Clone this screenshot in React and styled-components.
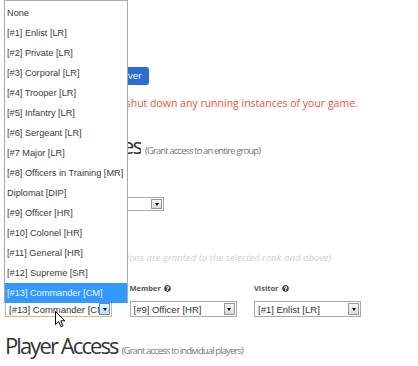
import React from 'react';
import styled, { createGlobalStyle } from 'styled-components';
import { FaQuestionCircle } from 'react-icons/fa';

const GlobalStyle = createGlobalStyle`
  html, body {
    margin: 0;
    padding: 0;
    background: #fff;
  }
`;

const ranks = [
  'None',
  '[#1] Enlist [LR]',
  '[#2] Private [LR]',
  '[#3] Corporal [LR]',
  '[#4] Trooper [LR]',
  '[#5] Infantry [LR]',
  '[#6] Sergeant [LR]',
  '[#7 Major [LR]',
  '[#8] Officers in Training [MR]',
  'Diplomat [DIP]',
  '[#9] Officer [HR]',
  '[#10] Colonel [HR]',
  '[#11] General [HR]',
  '[#12] Supreme [SR]',
  '[#13] Commander [CM]',
];

const Page = styled.div`
  position: relative;
  width: 418px;
  height: 366px;
  overflow: hidden;
  box-sizing: border-box;
  padding: 67px 0 0 5px;
  background: #fff;
  font-family: "Open Sans", sans-serif;
  color: #333;
`;

const ButtonRow = styled.div`
  display: flex;
  justify-content: flex-end;
  width: 144px;
`;

const Button = styled.button`
  height: 18px;
  padding: 0 7px;
  border: none;
  border-radius: 3px;
  background: #2d6cd3;
  color: #fff;
  font-family: "Open Sans", sans-serif;
  font-size: 9.5px;
  line-height: 18px;
`;

const Warning = styled.p`
  margin: 11px 0 0;
  font-size: 10.5px;
  line-height: 14px;
  color: #e8503a;
  white-space: nowrap;
`;

const Lead = styled.span`
  display: inline-block;
  width: ${p => p.$width}px;
  text-align: right;
  white-space: nowrap;
  overflow: hidden;
  vertical-align: top;
`;

const Heading = styled.h2`
  margin: ${p => p.$top}px 0 0;
  font-size: 22px;
  font-weight: 400;
  line-height: 26px;
  letter-spacing: -1.9px;
  color: #333;
  white-space: nowrap;
`;

const HeadingSub = styled.small`
  margin-left: 4px;
  font-size: 9.5px;
  letter-spacing: -0.9px;
  color: #777;
`;

const FieldLabel = styled.div`
  margin-top: 18px;
  height: 12px;
  font-size: 7.5px;
  font-weight: 700;
  line-height: 12px;
  color: #555;
`;

const SelectBox = styled.div`
  display: flex;
  align-items: center;
  box-sizing: border-box;
  width: ${p => p.$width}px;
  height: ${p => p.$height || 16}px;
  margin-top: ${p => p.$top || 0}px;
  padding: 0 1px 0 3px;
  border: 1px solid ${p => (p.$focused ? '#e2b467' : '#a9a9a9')};
  background: #fff;
  font-family: "Liberation Sans", Arial, sans-serif;
  font-size: 9.5px;
  color: #333;
`;

const SelectText = styled.span`
  flex: 1;
  overflow: hidden;
  white-space: nowrap;
`;

const Arrow = styled.span`
  display: flex;
  align-items: center;
  justify-content: center;
  box-sizing: border-box;
  width: 11px;
  height: ${p => p.$height || 12}px;
  border: 1px solid ${p => (p.$hover ? '#5a8fc0' : '#999')};
  background: ${p =>
    p.$hover
      ? 'linear-gradient(#e3f1fb, #bcdcf4)'
      : 'linear-gradient(#f6f6f6, #d9d9d9)'};

  &::after {
    content: '';
    border-left: 2.5px solid transparent;
    border-right: 2.5px solid transparent;
    border-top: 3px solid #111;
  }
`;

const Note = styled.p`
  margin: 40px 0 0;
  font-size: 9.6px;
  font-style: italic;
  line-height: 14px;
  color: #cfcfcf;
  white-space: nowrap;
`;

const RoleGrid = styled.div`
  display: grid;
  grid-template-columns: repeat(3, 124.5px);
  margin-top: 17px;
`;

const RoleLabel = styled.div`
  display: flex;
  align-items: center;
  gap: 3px;
  height: 12px;
  margin-bottom: 7px;
  font-size: 7.5px;
  font-weight: 700;
  color: #555;

  svg {
    width: 7px;
    height: 7px;
    color: #4a4a4a;
  }
`;

const DropList = styled.ul`
  position: absolute;
  left: 4px;
  top: 0;
  box-sizing: border-box;
  width: 124px;
  height: 303px;
  margin: 0;
  padding: 2px 0 0;
  list-style: none;
  border: 1px solid #a9a9a9;
  border-bottom: none;
  background: #fff;
  font-family: "Liberation Sans", Arial, sans-serif;
  font-size: 9.2px;
`;

const DropItem = styled.li`
  height: 20px;
  padding-left: 2px;
  line-height: 20px;
  white-space: nowrap;
  color: ${p => (p.$active ? '#eef6ff' : '#3a3a3a')};
  background: ${p => (p.$active ? '#3399ff' : 'transparent')};
`;

const Cursor = styled.svg`
  position: absolute;
  left: 55px;
  top: 311px;
`;

const Select = ({ value, width, focused, hover, height, top }) => (
  <SelectBox $width={width} $focused={focused} $height={height} $top={top}>
    <SelectText>{value}</SelectText>
    <Arrow $hover={hover} $height={height ? height - 4 : 12} />
  </SelectBox>
);

const roles = [
  { label: 'Admin', value: '[#13] Commander [CM]', focused: true },
  { label: 'Member', value: '[#9] Officer [HR]' },
  { label: 'Visitor', value: '[#1] Enlist [LR]' },
];

export default function App() {
  return (
    <Page>
      <GlobalStyle />
      <ButtonRow>
        <Button>Save Server</Button>
      </ButtonRow>
      <Warning>
        <Lead $width={118}>Note: saving will</Lead> shut down any running instances of your game.
      </Warning>

      <Heading $top={22}>
        <Lead $width={136}>Group Roles</Lead>
        <HeadingSub>(Grant access to an entire group)</HeadingSub>
      </Heading>
      <FieldLabel>Default Rank</FieldLabel>
      <Select value="None" width={159} height={14} top={3} />
      <Note>
        <Lead $width={139}>(Permissions</Lead> are granted to the selected rank and above)
      </Note>

      <RoleGrid>
        {roles.map(role => (
          <div key={role.label}>
            <RoleLabel>
              {role.label} <FaQuestionCircle />
            </RoleLabel>
            <Select value={role.value} width={107} focused={role.focused} hover={role.focused} />
          </div>
        ))}
      </RoleGrid>

      <Heading $top={15}>
        Player Access
        <HeadingSub>(Grant access to individual players)</HeadingSub>
      </Heading>

      <DropList>
        {ranks.map((rank, i) => (
          <DropItem key={rank} $active={i === ranks.length - 1}>
            {rank}
          </DropItem>
        ))}
      </DropList>

      <Cursor width="11" height="17" viewBox="0 0 11 17">
        <path d="M0.5 0.5 L0.5 13.5 L3.7 10.6 L6 15.8 L8 14.9 L5.8 9.8 L9.8 9.8 Z" fill="#fff" stroke="#000" strokeWidth="1" />
      </Cursor>
    </Page>
  );
}
